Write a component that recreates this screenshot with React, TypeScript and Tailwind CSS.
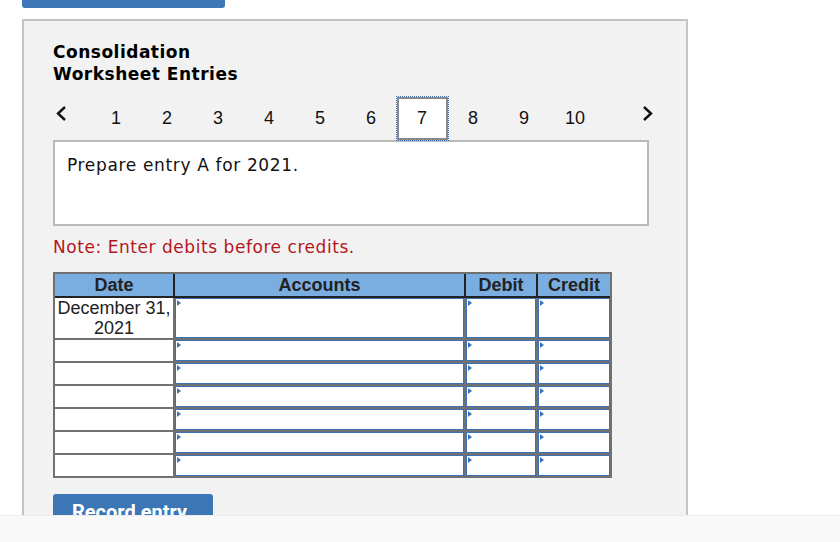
import React from 'react';

const PAGES = [1, 2, 3, 4, 5, 6, 7, 8, 9, 10];
const ACTIVE = 7;
const EXTRA_ROWS = 6;

const Marker = () => (
  <span className="absolute left-[1px] top-[1px] w-0 h-0 border-y-[3px] border-y-transparent border-l-[4px] border-l-[#3b72b6]" />
);

const InputCell = () => (
  <div className="relative bg-white border border-[#3b72b6]">
    <Marker />
  </div>
);

const Chevron = ({ dir }: { dir: 'left' | 'right' }) => (
  <svg width="12" height="18" viewBox="0 0 12 18" fill="none">
    <polyline
      points={dir === 'left' ? '10,2 3,8.5 10,15' : '2,2 9,8.5 2,15'}
      stroke="#111"
      strokeWidth="2.4"
      strokeLinecap="butt"
      strokeLinejoin="miter"
    />
  </svg>
);

export default function App() {
  return (
    <div className="relative w-[840px] h-[542px] overflow-hidden bg-white">
      {/* top tab remnant */}
      <div className="ml-[22px] w-[203px] h-[8px] bg-[#3d77b8] rounded-b-[3px]" />

      {/* Worksheet panel */}
      <div className="mt-[11px] ml-[22px] w-[666px] border-2 border-[#c4c4c4] bg-[#f2f2f2] pt-[20px] pl-[29px] pb-[40px]">
        <h2 className="font-['DejaVu_Sans',sans-serif] font-bold text-[17px] tracking-[0.5px] leading-[22px] text-black">
          Consolidation
          <br />
          Worksheet Entries
        </h2>

        {/* pagination */}
        <div className="mt-[12px] flex items-start h-[43px] font-['Liberation_Sans',Arial,sans-serif] text-[18px] text-[#111]">
          <button className="w-[37.5px] pl-[2px] pt-[8px] flex">
            <Chevron dir="left" />
          </button>
          {PAGES.map((p) =>
            p === ACTIVE ? (
              <div
                key={p}
                className="w-[51px] h-[43px] flex items-center justify-center bg-white border-2 border-[#8a8a8a] outline-1 outline-dotted outline-[#3b72b6]"
              >
                {p}
              </div>
            ) : (
              <div key={p} className="w-[51px] h-[43px] flex items-center justify-center">
                {p}
              </div>
            )
          )}
          <button className="ml-[41px] pt-[8px] flex">
            <Chevron dir="right" />
          </button>
        </div>

        {/* prompt */}
        <div className="w-[596px] h-[86px] border-2 border-[#bababa] bg-white pl-[12px] pt-[12px] font-['DejaVu_Sans',sans-serif] text-[17px] tracking-[0.65px] leading-[22px] text-[#111]">
          Prepare entry A for 2021.
        </div>

        <p className="mt-[10px] font-['DejaVu_Sans',sans-serif] text-[17px] tracking-[0.55px] leading-[22px] text-[#b3161e]">
          Note: Enter debits before credits.
        </p>

        {/* journal table */}
        <div className="mt-[14px] w-[559px] border-2 border-[#717171] bg-[#717171] font-['Liberation_Sans',Arial,sans-serif] text-[18px] text-[#222]">
          <div className="grid grid-cols-[118px_289px_70px_72px] gap-x-[2px] bg-[#222] border-b-2 border-[#222]">
            {['Date', 'Accounts', 'Debit', 'Credit'].map((h) => (
              <div key={h} className="h-[22px] bg-[#7aade0] flex items-center justify-center font-bold leading-none">
                {h}
              </div>
            ))}
          </div>
          <div className="grid grid-cols-[118px_289px_70px_72px] gap-[2px]">
            <div className="h-[40px] bg-white flex flex-col items-center justify-center leading-[20px]">
              <span>December 31,</span>
              <span>2021</span>
            </div>
            <InputCell />
            <InputCell />
            <InputCell />
            {Array.from({ length: EXTRA_ROWS }).map((_, i) => (
              <React.Fragment key={i}>
                <div className="h-[21px] bg-white" />
                <InputCell />
                <InputCell />
                <InputCell />
              </React.Fragment>
            ))}
          </div>
        </div>

        <button className="mt-[16px] w-[160px] h-[36px] rounded-[3px] bg-[#3c76b6] text-white text-left pl-[19px] font-['Roboto',sans-serif] font-bold text-[20px] leading-none">
          Record entry
        </button>
      </div>

      {/* bottom bar */}
      <div className="absolute left-0 right-0 top-[515px] bottom-0 bg-[#f9f9f9] border-t border-[#ececec]" />
    </div>
  );
}
